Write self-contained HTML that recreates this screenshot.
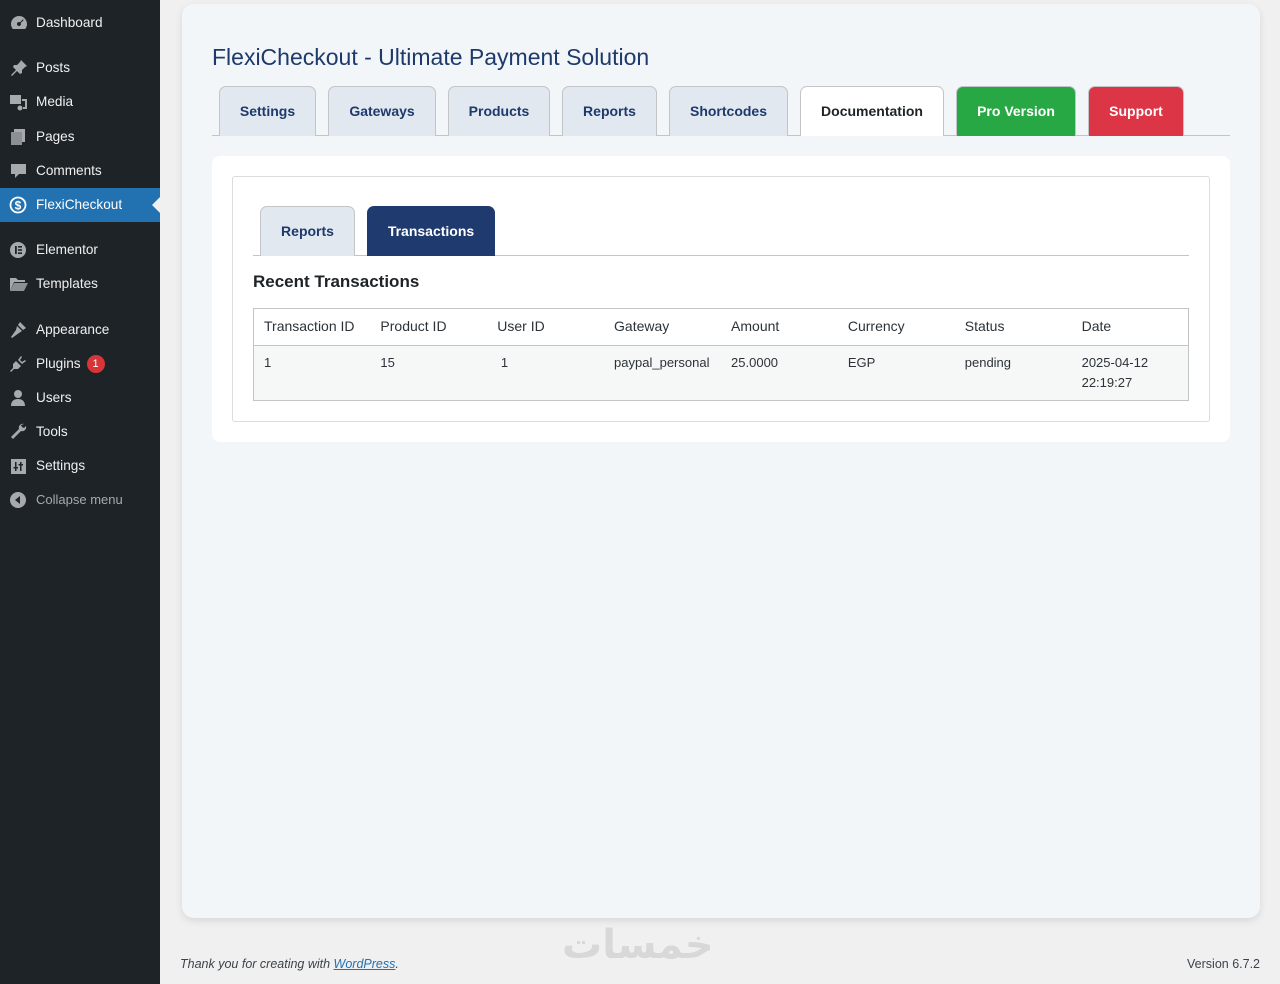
<!DOCTYPE html>
<html><head><style>
*{box-sizing:border-box;margin:0;padding:0}
body{width:1280px;height:984px;background:#f0f0f1;font-family:"Liberation Sans",Arial,sans-serif;position:relative;overflow:hidden}
#side{position:absolute;left:0;top:0;width:160px;height:984px;background:#1d2327}
.mi{position:absolute;left:0;width:160px;height:34px;color:#f0f0f1;font-size:13.6px;line-height:34px;padding-left:36px}
.mi svg{position:absolute;left:9px;top:8px}
.act{background:#2271b1;color:#fff}
.act:after{content:"";position:absolute;right:0;top:9px;border:8px solid transparent;border-right-color:#f0f0f1}
.badge{display:inline-block;width:18px;height:18px;border-radius:9px;background:#d63638;color:#fff;font-size:11px;line-height:18px;text-align:center;margin-left:6px;vertical-align:1px}
#card{position:absolute;left:182px;top:4px;width:1078px;height:914px;background:#f3f6f9;border-radius:12px;box-shadow:0 3px 8px rgba(0,0,0,.1)}
h1{position:absolute;left:212px;top:44px;font-size:23px;font-weight:normal;color:#1d3a6b}
.tab{position:absolute;top:86px;height:50px;border:1px solid #c3c4c7;border-bottom:none;border-radius:7px 7px 0 0;background:#e2e8f0;color:#1d3a6b;font-weight:bold;font-size:14px;text-align:center;line-height:48px}
#tline{position:absolute;left:212px;top:135px;width:1018px;height:1px;background:#c3c4c7}
#panel{position:absolute;left:212px;top:156px;width:1018px;height:286px;background:#fff;border-radius:8px}
#inner{position:absolute;left:232px;top:176px;width:978px;height:246px;background:#fff;border:1px solid #dcdcde;border-radius:3px}
.st{position:absolute;top:206px;height:50px;border:1px solid #c3c4c7;border-bottom:none;border-radius:7px 7px 0 0;background:#e2e8f0;color:#1d3a6b;font-weight:bold;font-size:14px;text-align:center;line-height:48px}
#sline{position:absolute;left:253px;top:255px;width:936px;height:1px;background:#c3c4c7}
h2{position:absolute;left:253px;top:272px;font-size:17px;color:#1d2327}
table{position:absolute;left:253px;top:308px;width:936px;border-collapse:collapse;border:1px solid #c3c4c7;font-size:14px;color:#2c3338}
th{font-weight:normal;text-align:left;height:37px;padding:0 10px 2px;border-bottom:1px solid #c3c4c7;width:117px}
td{background:#f6f7f7;vertical-align:top;padding:7px 10px 0;height:55px;font-size:13px;line-height:20px}
#foot{position:absolute;top:957px;left:180px;font-size:12.5px;font-style:italic;color:#3c434a}
#foot a{color:#2271b1;text-decoration:underline}
#ver{position:absolute;top:957px;right:20px;font-size:12.5px;color:#3c434a}
#wm{position:absolute;left:562px;top:922px;font-size:40px;color:#d8d8d8;font-family:"DejaVu Sans",sans-serif;font-weight:bold}
</style></head><body>
<div id="side">
<div class="mi" style="top:6px"><svg width="20" height="18" viewBox="0 0 20 18"><path d="M10 2a8 8 0 0 0-8 8c0 2 .7 3.6 1.8 5h12.4A8 8 0 0 0 10 2zm0 10a2 2 0 1 1 1-3.7l3-3 .7.7-3 3A2 2 0 0 1 10 12z" fill="#a7aaad"/></svg>Dashboard</div>
<div class="mi" style="top:51px"><svg width="20" height="18"><path d="M12 1l6 6-2 1-3 3 0 3-2 1-3-3-5 5-1-1 5-5-3-3 1-2h3l3-3z" fill="#a7aaad"/></svg>Posts</div>
<div class="mi" style="top:85px"><svg width="20" height="18"><rect x="1" y="2" width="11" height="9" fill="#a7aaad"/><path d="M13 6h5v10h-4v-2h2V8h-3z" fill="#a7aaad"/><circle cx="11" cy="15" r="2.5" fill="#a7aaad"/></svg>Media</div>
<div class="mi" style="top:120px"><svg width="20" height="18"><rect x="5" y="1" width="11" height="13" fill="#a7aaad"/><rect x="2" y="4" width="11" height="13" fill="#8c8f94"/></svg>Pages</div>
<div class="mi" style="top:154px"><svg width="20" height="18"><path d="M2 2h15v10h-7l-4 4v-4H2z" fill="#a7aaad"/></svg>Comments</div>
<div class="mi act" style="top:188px"><svg width="20" height="18"><circle cx="9" cy="9" r="7.5" fill="none" stroke="#fff" stroke-width="1.8"/><text x="9" y="13.5" font-size="12" font-weight="bold" fill="#fff" text-anchor="middle" font-family="Liberation Sans">$</text></svg>FlexiCheckout</div>
<div class="mi" style="top:233px"><svg width="20" height="18"><circle cx="9" cy="9" r="8" fill="#a7aaad"/><rect x="6" y="5" width="1.8" height="8" fill="#1d2327"/><rect x="9" y="5" width="4" height="1.6" fill="#1d2327"/><rect x="9" y="8.2" width="4" height="1.6" fill="#1d2327"/><rect x="9" y="11.4" width="4" height="1.6" fill="#1d2327"/></svg>Elementor</div>
<div class="mi" style="top:267px"><svg width="20" height="18"><path d="M1 3h6l2 2h7v2H5l-4 9z" fill="#a7aaad"/><path d="M5 8h14l-4 8H1z" fill="#8c8f94"/></svg>Templates</div>
<div class="mi" style="top:313px"><svg width="20" height="18"><path d="M11 1l6 6-3 2-5-5zM8 5l5 5-3 2-7 5-1-1 5-7z" fill="#a7aaad"/></svg>Appearance</div>
<div class="mi" style="top:347px"><svg width="20" height="18"><path d="M12 1l-3 4 4 4 4-3-1-1-3 2-2-2 2-3zM7 6l5 5-3 3H5l-3 3-1-1 3-3V9z" fill="#a7aaad"/></svg>Plugins<span class="badge">1</span></div>
<div class="mi" style="top:381px"><svg width="20" height="18"><circle cx="9" cy="5" r="4" fill="#a7aaad"/><path d="M2 17c0-5 3-7 7-7s7 2 7 7z" fill="#a7aaad"/></svg>Users</div>
<div class="mi" style="top:415px"><svg width="20" height="18"><path d="M15 1a4 4 0 0 0-5 5L2 14l2 2 8-8a4 4 0 0 0 5-5l-2 2-2-1-1-2z" fill="#a7aaad"/></svg>Tools</div>
<div class="mi" style="top:449px"><svg width="20" height="18"><rect x="2" y="2" width="15" height="15" fill="#a7aaad"/><rect x="6" y="5" width="1.5" height="9" fill="#1d2327"/><rect x="11" y="5" width="1.5" height="9" fill="#1d2327"/><rect x="4.5" y="10" width="4.5" height="1.5" fill="#1d2327"/><rect x="9.5" y="7" width="4.5" height="1.5" fill="#1d2327"/></svg>Settings</div>
<div class="mi" style="top:483px;color:#a7aaad;font-size:13px"><svg width="20" height="18"><circle cx="9" cy="9" r="8" fill="#a7aaad"/><path d="M11 5v8L6 9z" fill="#1d2327"/></svg>Collapse menu</div>
</div>
<div id="card"></div>
<h1>FlexiCheckout - Ultimate Payment Solution</h1>
<div id="tline"></div>
<div class="tab" style="left:219px;width:97px">Settings</div>
<div class="tab" style="left:328px;width:108px">Gateways</div>
<div class="tab" style="left:448px;width:102px">Products</div>
<div class="tab" style="left:562px;width:95px">Reports</div>
<div class="tab" style="left:669px;width:119px">Shortcodes</div>
<div class="tab" style="left:800px;width:144px;background:#fff;color:#1d2327">Documentation</div>
<div class="tab" style="left:956px;width:120px;background:#28a745;color:#fff">Pro Version</div>
<div class="tab" style="left:1088px;width:96px;background:#dc3545;color:#fff">Support</div>
<div id="panel"></div>
<div id="inner"></div>
<div id="sline"></div>
<div class="st" style="left:260px;width:95px">Reports</div>
<div class="st" style="left:367px;width:128px;background:#1e3a6e;color:#fff;border-color:#1e3a6e">Transactions</div>
<h2>Recent Transactions</h2>
<table><tr><th>Transaction ID</th><th>Product ID</th><th>User ID</th><th>Gateway</th><th>Amount</th><th>Currency</th><th>Status</th><th>Date</th></tr>
<tr><td>1</td><td>15</td><td>&nbsp;1</td><td>paypal_personal</td><td>25.0000</td><td>EGP</td><td>pending</td><td>2025-04-12<br>22:19:27</td></tr></table>
<div id="wm">خمسات</div>
<div id="foot">Thank you for creating with <a>WordPress</a>.</div>
<div id="ver">Version 6.7.2</div>
</body></html>
